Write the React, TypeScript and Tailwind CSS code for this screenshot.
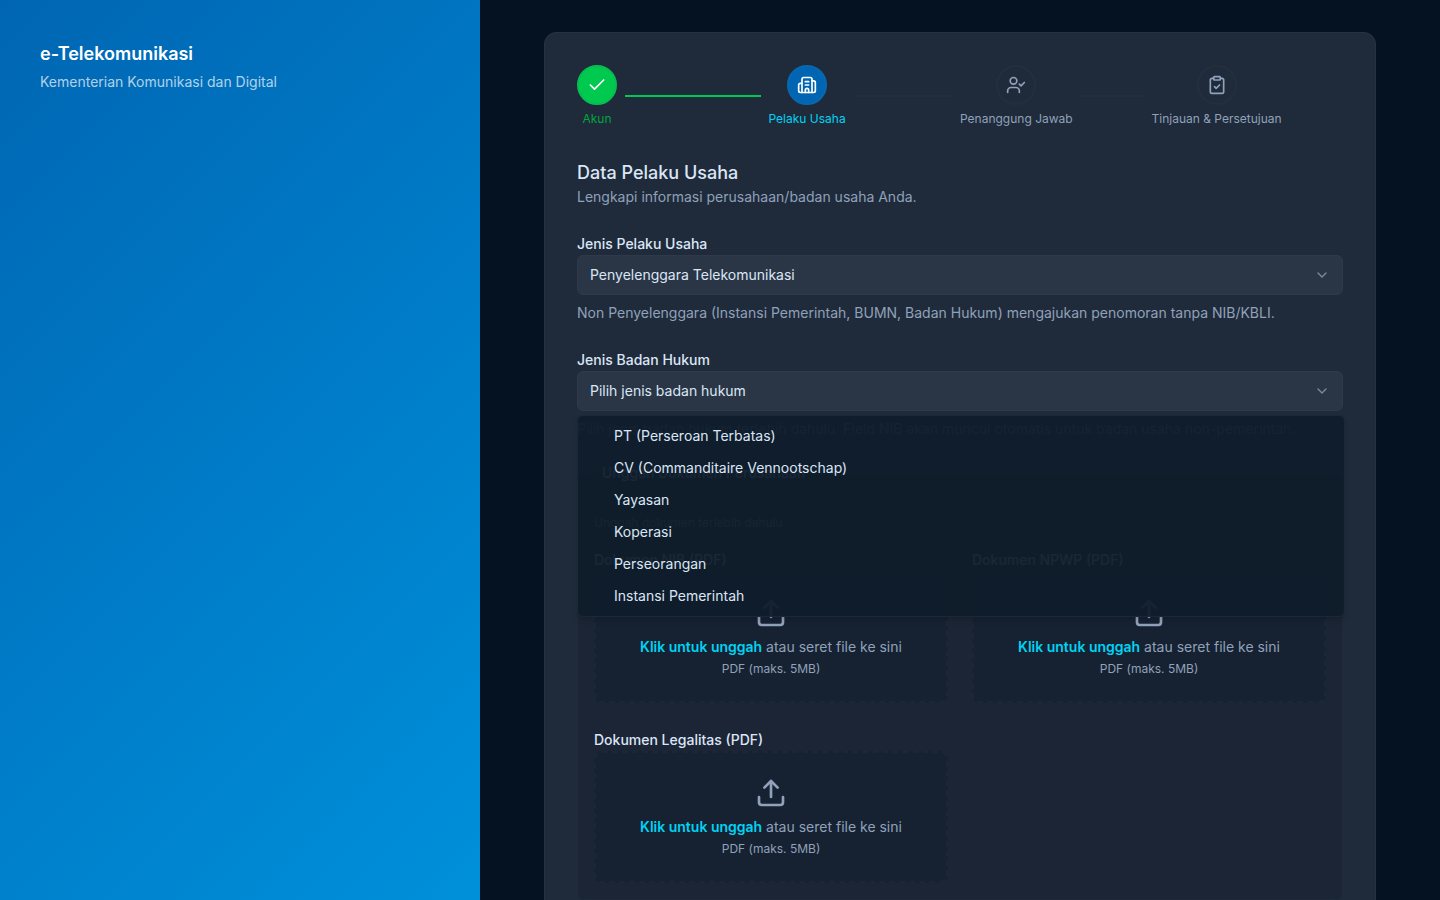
import { Building2, Check, ChevronDown, ClipboardCheck, Upload, UserCheck } from 'lucide-react';
import type { LucideIcon } from 'lucide-react';

type StepState = 'done' | 'current' | 'todo';

const steps: { label: string; icon: LucideIcon; state: StepState }[] = [
  { label: 'Akun', icon: Check, state: 'done' },
  { label: 'Pelaku Usaha', icon: Building2, state: 'current' },
  { label: 'Penanggung Jawab', icon: UserCheck, state: 'todo' },
  { label: 'Tinjauan & Persetujuan', icon: ClipboardCheck, state: 'todo' },
];

const circleStyles: Record<StepState, string> = {
  done: 'border-[#07bd50] bg-[#00c950] text-white',
  current: 'border-[#0768af] bg-[#0066b3] text-white',
  todo: 'border-[#232f3f] text-[#90a1b9]',
};

const labelStyles: Record<StepState, string> = {
  done: 'text-[#00a63e]',
  current: 'text-[#00d3f2]',
  todo: 'text-[#90a1b9]',
};

const legalForms = [
  'PT (Perseroan Terbatas)',
  'CV (Commanditaire Vennootschap)',
  'Yayasan',
  'Koperasi',
  'Perseorangan',
  'Instansi Pemerintah',
];

const documents = [
  { id: 'nib', label: 'Dokumen NIB (PDF)' },
  { id: 'npwp', label: 'Dokumen NPWP (PDF)' },
  { id: 'legalitas', label: 'Dokumen Legalitas (PDF)' },
];

function Stepper() {
  return (
    <ol className="flex">
      {steps.map(({ label, icon: Icon, state }, i) => (
        <li key={label} className="flex flex-1 basis-0 items-center">
          <div className="flex shrink-0 flex-col items-center gap-1.5">
            <span className={`flex size-10 items-center justify-center rounded-full border-2 ${circleStyles[state]}`}>
              <Icon size={20} strokeWidth={2} />
            </span>
            <span className={`text-xs whitespace-nowrap ${labelStyles[state]}`}>{label}</span>
          </div>
          {i < steps.length - 1 && (
            <span className={`mx-2 h-0.5 flex-1 ${state === 'done' ? 'bg-[#00c950]' : 'bg-[#232f3f]'}`} />
          )}
        </li>
      ))}
    </ol>
  );
}

function SelectField({ id, label, options }: { id: string; label: string; options: string[] }) {
  return (
    <div className="flex flex-col gap-1">
      <label htmlFor={id} className="text-sm leading-[14px] font-medium">
        {label}
      </label>
      <div className="relative">
        <select
          id={id}
          className="h-10 w-full appearance-none rounded-md border border-[#2e3a49] bg-[#2a3646] px-3 text-sm outline-none"
        >
          {options.map((option) => (
            <option key={option}>{option}</option>
          ))}
        </select>
        <ChevronDown size={16} className="pointer-events-none absolute top-3 right-[13px] text-[#7d8a9c]" />
      </div>
    </div>
  );
}

function FileDrop({ id, label }: { id: string; label: string }) {
  return (
    <div className="flex flex-col gap-1">
      <label htmlFor={id} className="text-sm leading-[14px] font-medium">
        {label}
      </label>
      <label
        htmlFor={id}
        className="flex cursor-pointer flex-col items-center rounded-lg border-2 border-dashed border-[#1c2736] bg-[#162132] p-6 text-[#90a1b9]"
      >
        <Upload size={32} />
        <span className="mt-2 text-sm">
          <span className="font-semibold text-[#00d3f2]">Klik untuk unggah</span> atau seret file ke sini
        </span>
        <span className="mt-1 text-xs">PDF (maks. 5MB)</span>
        <input id={id} type="file" accept="application/pdf" className="hidden" />
      </label>
    </div>
  );
}

export default function App() {
  return (
    <div className="flex h-screen overflow-hidden bg-[#051221] font-[Inter,sans-serif] text-[#dbe6f5]">
      <aside className="w-1/3 shrink-0 bg-linear-135 from-[#0066b3] to-[#0090da] p-10 text-white">
        <p className="text-lg font-semibold">e-Telekomunikasi</p>
        <p className="mt-1 text-sm text-white/70">Kementerian Komunikasi dan Digital</p>
      </aside>

      <main className="flex-1 overflow-y-auto px-16 py-8 [scrollbar-width:none]">
        <div className="rounded-xl border border-[#263242] bg-[#1f2b3b] p-8">
          <Stepper />

          <header className="mt-8">
            <h1 className="text-lg font-medium">Data Pelaku Usaha</h1>
            <p className="text-sm text-[#90a1b9]">Lengkapi informasi perusahaan/badan usaha Anda.</p>
          </header>

          <form className="mt-[30px] flex flex-col gap-[30px]">
            <div>
              <SelectField
                id="jenis-pelaku"
                label="Jenis Pelaku Usaha"
                options={['Penyelenggara Telekomunikasi', 'Non Penyelenggara']}
              />
              <p className="mt-2 text-sm text-[#90a1b9]">
                Non Penyelenggara (Instansi Pemerintah, BUMN, Badan Hukum) mengajukan penomoran tanpa NIB/KBLI.
              </p>
            </div>

            <div className="relative">
              <SelectField id="badan-hukum" label="Jenis Badan Hukum" options={['Pilih jenis badan hukum', ...legalForms]} />
              <p className="mt-2 text-sm text-[#90a1b9]">
                Pilih jenis badan hukum terlebih dahulu. Field NIB akan muncul otomatis untuk badan usaha non-pemerintah.
              </p>
              <ul
                role="listbox"
                aria-label="Jenis Badan Hukum"
                className="absolute top-[62px] right-[-2px] left-0 z-10 rounded-md border border-[#1c2838] bg-[#0f1c2b]/95 p-1 shadow-md"
              >
                {legalForms.map((form) => (
                  <li key={form} role="option" aria-selected="false" className="py-1.5 pr-2 pl-8 text-sm">
                    {form}
                  </li>
                ))}
              </ul>
            </div>

            <fieldset className="-mt-1.5 rounded-lg border border-[#1e2939] bg-[#1b2536] p-4">
              <legend className="px-2 text-sm font-medium">Unggah Dokumen Perusahaan</legend>
              <p className="mt-4 text-xs text-[#90a1b9]">Unggah dokumen terlebih dahulu</p>
              <div className="mt-[22px] grid grid-cols-2 gap-x-6 gap-y-[30px]">
                {documents.map((doc) => (
                  <FileDrop key={doc.id} id={doc.id} label={doc.label} />
                ))}
              </div>
            </fieldset>
          </form>
        </div>
      </main>
    </div>
  );
}
